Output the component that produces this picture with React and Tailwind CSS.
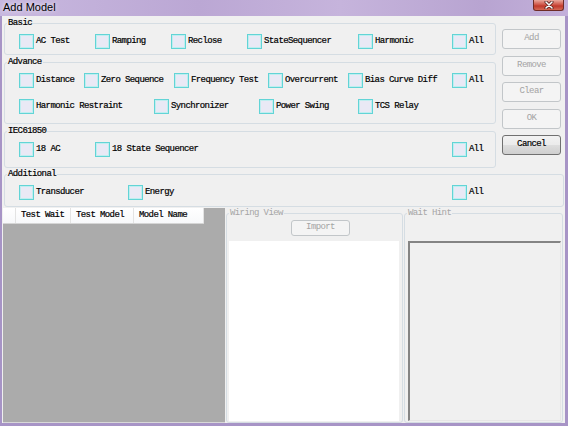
import React from 'react';

const basic = [
  { label: 'AC Test', w: 'w-[76px]' },
  { label: 'Ramping', w: 'w-[76px]' },
  { label: 'Reclose', w: 'w-[76px]' },
  { label: 'StateSequencer', w: 'w-[111px]' },
  { label: 'Harmonic', w: 'w-[94px]' },
  { label: 'All', w: '' },
];

const advance1 = [
  { label: 'Distance', w: 'w-[65px]' },
  { label: 'Zero Sequence', w: 'w-[90px]' },
  { label: 'Frequency Test', w: 'w-[94px]' },
  { label: 'Overcurrent', w: 'w-[80px]' },
  { label: 'Bias Curve Diff', w: 'w-[104px]' },
  { label: 'All', w: '' },
];

const advance2 = [
  { label: 'Harmonic Restraint', w: 'w-[135px]' },
  { label: 'Synchronizer', w: 'w-[105px]' },
  { label: 'Power Swing', w: 'w-[99px]' },
  { label: 'TCS Relay', w: '' },
];

const iec = [
  { label: '18 AC', w: 'w-[76px]' },
  { label: '18 State Sequencer', w: 'w-[357px]' },
  { label: 'All', w: '' },
];

const additional = [
  { label: 'Transducer', w: 'w-[109px]' },
  { label: 'Energy', w: 'w-[324px]' },
  { label: 'All', w: '' },
];

function Check({ label, w }) {
  return (
    <div className={`flex items-center h-[15px] shrink-0 ${w}`}>
      <span className="w-[15px] h-[15px] shrink-0 border border-[#62d4d6] bg-[#e9e9f5] shadow-[inset_0_0_0_1px_#bfeef0]" />
      <span className="ml-[2px] text-[9px] leading-[15px] tracking-[-0.6px] text-black whitespace-nowrap [-webkit-text-stroke:0.2px_#000]">{label}</span>
    </div>
  );
}

function Row({ items, className = '' }) {
  return (
    <div className={`flex pl-[14px] ${className}`}>
      {items.map((it, i) => (
        <Check key={i} label={it.label} w={it.w} />
      ))}
    </div>
  );
}

function Group({ title, className = '', muted = false, children }) {
  return (
    <fieldset className={`border border-[#d5dde3] rounded-[3px] ${className}`}>
      <legend className={`ml-[2px] px-[1px] text-[9px] leading-[12px] tracking-[-0.6px] ${muted ? 'text-[#a6a6a6]' : 'text-black [-webkit-text-stroke:0.2px_#000]'}`}>
        {title}
      </legend>
      {children}
    </fieldset>
  );
}

function Btn({ children, disabled = true, className = '' }) {
  return (
    <button
      className={`flex items-center justify-center rounded-[3px] text-[9px] tracking-[-0.6px] ${
        disabled
          ? 'border border-[#c2c6c9] bg-[#f4f4f4] text-[#a3a3a3]'
          : 'border border-[#707070] bg-[linear-gradient(180deg,#f2f2f2,#ebebeb_48%,#dddddd_52%,#cfcfcf)] text-black [-webkit-text-stroke:0.2px_#000]'
      } ${className}`}
    >
      {children}
    </button>
  );
}

export default function App() {
  return (
    <div className="w-[568px] h-[426px] flex flex-col overflow-hidden bg-[#a794c6] font-['Liberation_Mono',monospace]">
      {/* title bar */}
      <div className="h-[16px] shrink-0 flex items-start justify-between bg-[linear-gradient(90deg,#c8b8df,#bba7d4_35%,#c6b4dc_60%,#b8a4d1_85%,#c3b0da)]">
        <span className="ml-[3px] mt-[1px] text-[11px] leading-[12px] text-black font-['Liberation_Sans',sans-serif] [text-shadow:0_0_4px_#ffffff]">
          Add Model
        </span>
        <div className="mr-[4px] w-[31px] h-[11px] flex items-center justify-center rounded-b-[3px] border border-t-0 border-[#6e2c26] bg-[linear-gradient(180deg,#e9a89c,#d0584a_45%,#c0392b_60%,#d66a55)]">
          <svg width="10" height="8" viewBox="0 0 10 8">
            <path d="M2 1 L8 7 M8 1 L2 7" stroke="#4a1a16" strokeWidth="3" strokeLinecap="round" />
            <path d="M2 1 L8 7 M8 1 L2 7" stroke="#ffffff" strokeWidth="1.6" strokeLinecap="round" />
          </svg>
        </div>
      </div>

      {/* body */}
      <div className="flex-1 ml-[2px] mr-[3px] mb-[3px] bg-[#f0f0f0] flex flex-col">
        <div className="flex">
          <div className="ml-[2px] w-[492px] flex flex-col">
            <Group title="Basic" className="mt-[1px] h-[38px]">
              <Row items={basic} className="mt-[5px]" />
            </Group>
            <Group title="Advance" className="mt-[1px] h-[68px]">
              <Row items={advance1} className="mt-[5px]" />
              <Row items={advance2} className="mt-[11px]" />
            </Group>
            <Group title="IEC61850" className="mt-[1px] h-[43px]">
              <Row items={iec} className="mt-[5px]" />
            </Group>
          </div>
          <div className="ml-[6px] pt-[13px] flex flex-col gap-[6.5px]">
            <Btn className="w-[59px] h-[20px]">Add</Btn>
            <Btn className="w-[59px] h-[20px]">Remove</Btn>
            <Btn className="w-[59px] h-[20px]">Clear</Btn>
            <Btn className="w-[59px] h-[20px]">OK</Btn>
            <Btn disabled={false} className="w-[59px] h-[20px]">Cancel</Btn>
          </div>
        </div>

        <Group title="Additional" className="ml-[2px] mr-[1px] h-[39px]">
          <Row items={additional} className="mt-[5px]" />
        </Group>

        {/* bottom */}
        <div className="flex-1 flex min-h-0">
          <div className="ml-[1px] mt-[1px] w-[222px] bg-[#ababab] border-b border-[#d8d8d8]">
            <div className="flex h-[16px] w-[201px] bg-[linear-gradient(180deg,#ffffff,#f7f8fa)] border-b border-[#d5d5d5] text-[9px] tracking-[-0.6px] text-black [-webkit-text-stroke:0.2px_#000]">
              <div className="w-[13px] border-r border-[#e3e3e3]" />
              <div className="w-[55px] pl-[5px] flex items-center border-r border-[#e3e3e3]">Test Wait</div>
              <div className="w-[63px] pl-[5px] flex items-center border-r border-[#e3e3e3]">Test Model</div>
              <div className="w-[70px] pl-[5px] flex items-center border-r border-[#e3e3e3]">Model Name</div>
            </div>
          </div>

          <Group title="Wiring View" muted className="ml-[1px] w-[177px] flex flex-col">
            <Btn className="ml-[64px] mt-[1px] w-[59px] h-[16px]">Import</Btn>
            <div className="ml-[2px] mt-[5px] w-[170px] flex-1 mb-[1px] bg-white" />
          </Group>

          <Group title="Wait Hint" muted className="ml-[1px] w-[159px] flex flex-col">
            <div className="ml-[3px] mt-[22px] w-[153px] flex-1 mb-[1px] bg-[#f0f0f0] border-t-2 border-l-2 border-[#848484] border-r border-b border-r-[#e6e6e6] border-b-[#e6e6e6]" />
          </Group>
        </div>
      </div>
    </div>
  );
}
